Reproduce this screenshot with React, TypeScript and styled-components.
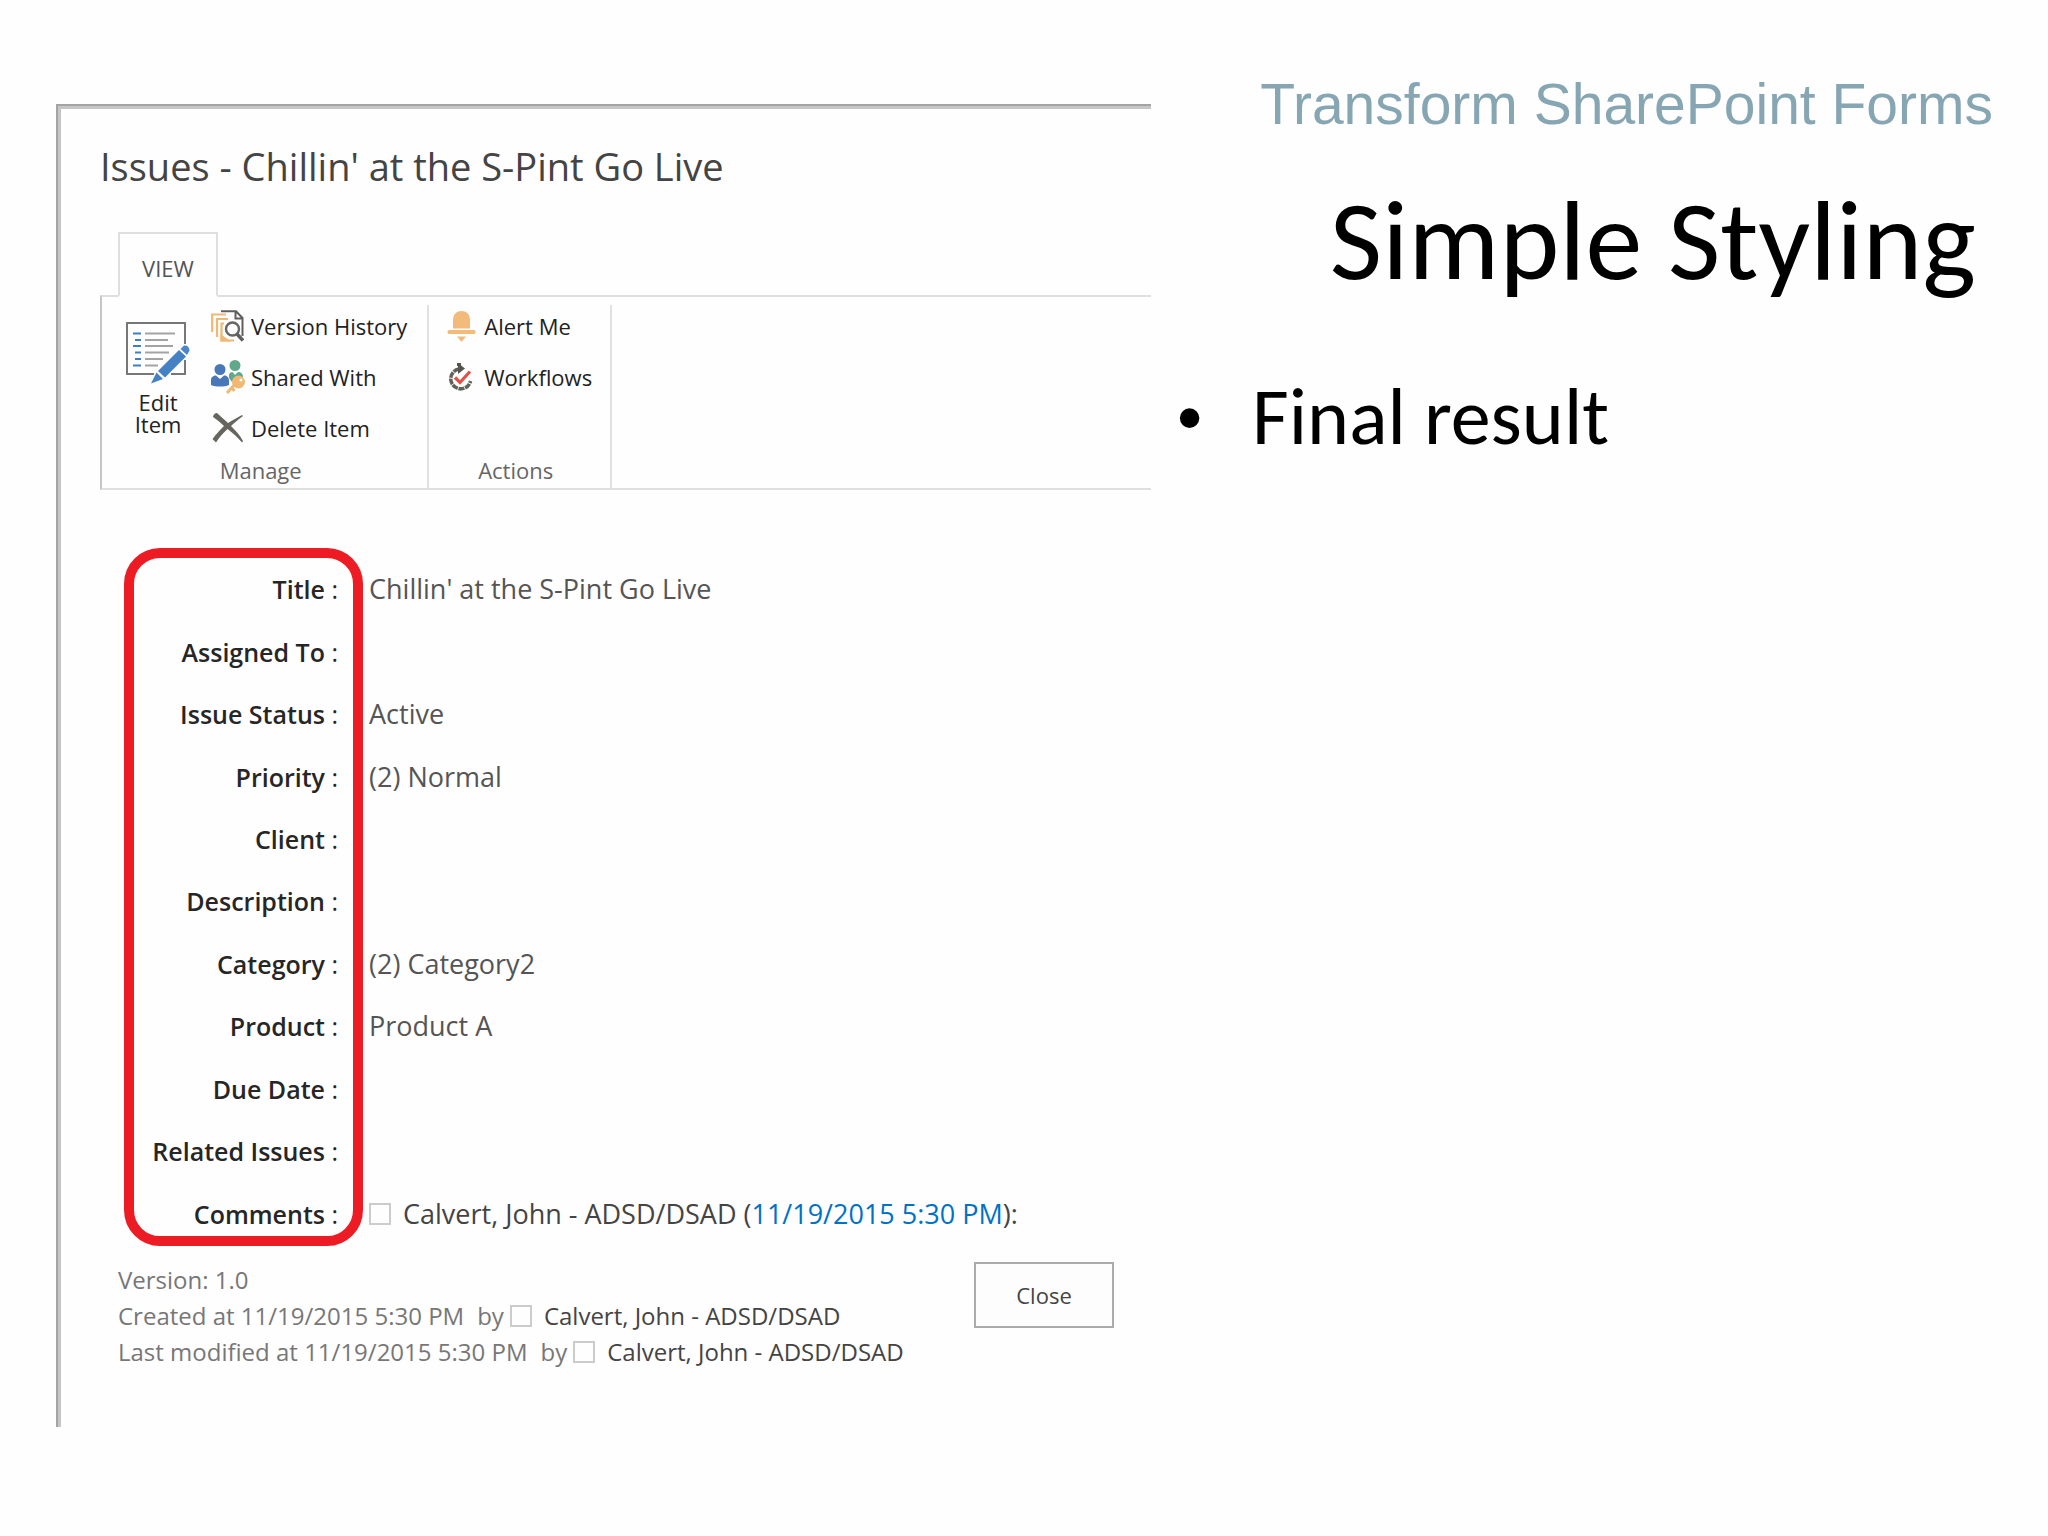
import React from 'react';
import styled, { createGlobalStyle } from 'styled-components';

const GlobalStyle = createGlobalStyle`
  *, *::before, *::after { box-sizing: border-box; }
  body { margin: 0; background: #fefefe; }
  h1, h2, p, ul { margin: 0; padding: 0; font-weight: 400; }
  button, input { font: inherit; margin: 0; }
`;

const uiFont = `'Open Sans', 'Noto Sans', sans-serif`;
const slideFont = `Carlito, Calibri, Lato, sans-serif`;

const Slide = styled.main`
  display: grid;
  grid-template-columns: minmax(0, 1151fr) minmax(0, 897fr);
  align-items: start;
  min-height: 100vh;
`;

const Frame = styled.section`
  margin: 104px 0 0 56px;
  padding: 36px 0 57px 42px;
  border: solid #a4a4a4;
  border-width: 2px 0 0 2px;
  box-shadow: inset 3px 3px 0 #c6c6c6;
  font-family: ${uiFont};
  color: #444;
`;

const PageTitle = styled.h2`
  font-size: 38px;
  line-height: 48px;
  white-space: nowrap;
`;

const TabBar = styled.div`
  display: flex;
  margin-top: 42px;
  padding-left: 18px;
`;

const Tab = styled.button`
  width: 100px;
  height: 65px;
  margin-bottom: -2px;
  padding: 6px 0 0;
  border: 2px solid #dedfe1;
  border-bottom-color: #fefefe;
  background: #fefefe;
  color: #555;
  font-size: 22px;
  position: relative;
`;

const Ribbon = styled.div`
  display: flex;
  padding-top: 8px;
  border: solid #dedfe1;
  border-width: 2px 0;
  border-left: 2px solid #c6c6c8;
`;

const Group = styled.section`
  display: flex;
  flex-direction: column;
  justify-content: space-between;
  border-right: 2px solid #e1e1e3;
`;

const GroupBody = styled.div<{ $start: number; $end: number }>`
  display: flex;
  gap: 21px;
  padding: 0 ${p => p.$end}px 0 ${p => p.$start}px;
`;

const GroupName = styled.h2`
  padding: 5px 8px 2px 0;
  font-size: 22px;
  line-height: 32px;
  text-align: center;
  color: #666;
`;

const Commands = styled.div<{ $icon: number }>`
  display: grid;
  grid-template-columns: ${p => p.$icon}px auto;
  align-content: start;
  row-gap: 9px;
`;

const Command = styled.button`
  display: grid;
  grid-column: 1 / -1;
  grid-template-columns: subgrid;
  align-items: center;
  justify-items: start;
  height: 42px;
  padding: 0;
  border: 0;
  background: none;
  color: #222;
  font-size: 22px;
  line-height: 42px;
  text-align: left;
  white-space: nowrap;
`;

const BigCommand = styled.button`
  display: flex;
  flex-direction: column;
  align-items: center;
  align-self: flex-start;
  gap: 7px;
  width: 64px;
  padding: 17px 0 0;
  border: 0;
  background: none;
  color: #222;
  font-size: 22px;
  line-height: 22px;
`;

const Form = styled.div`
  position: relative;
  margin-top: 68px;
`;

const Highlight = styled.div`
  position: absolute;
  top: -10px;
  bottom: 0;
  left: 24px;
  width: 239px;
  border: 10px solid #ed1c24;
  border-radius: 36px;
  pointer-events: none;
`;

const Fields = styled.table`
  width: 100%;
  height: 688px;
  border-collapse: collapse;
`;

const Label = styled.th`
  width: 269px;
  padding: 0 31px 0 0;
  font-size: 25px;
  font-weight: 600;
  line-height: 62px;
  text-align: right;
  white-space: nowrap;
  color: #262626;
`;

const Colon = styled.span`
  font-weight: 400;
`;

const Value = styled.td`
  padding: 0;
  font-size: 27px;
  line-height: 62px;
  white-space: nowrap;
  color: #555;
`;

const Person = styled.label`
  display: inline-flex;
  align-items: center;
  gap: 12px;
  color: #444;
`;

const Presence = styled.input`
  appearance: none;
  width: 22px;
  height: 22px;
  border: 2px solid #ccc;
  background: #fefefe;
`;

const Stamp = styled.a`
  color: #0072c6;
  text-decoration: none;
`;

const Footer = styled.footer`
  display: flex;
  justify-content: space-between;
  align-items: flex-start;
  margin-top: 16px;
  padding: 0 37px 0 18px;
`;

const History = styled.div`
  font-size: 24px;
  line-height: 36px;
  white-space: nowrap;
  color: #777;
`;

const HistoryLine = styled.p`
  display: flex;
  align-items: center;
`;

const By = styled.span`
  margin: 0 6px 0 13px;
`;

const CloseButton = styled.button`
  width: 140px;
  height: 66px;
  border: 2px solid #ababab;
  background: #fdfdfd;
  color: #444;
  font-size: 22px;
`;

const Notes = styled.section`
  display: flex;
  flex-direction: column;
  padding: 72px 55px 0 26px;
`;

const Deck = styled.p`
  font-family: 'Liberation Sans', Arial, sans-serif;
  font-size: 57px;
  line-height: 64px;
  text-align: right;
  white-space: nowrap;
  color: #87a6b3;
`;

const SlideTitle = styled.h1`
  margin-top: 36px;
  padding-right: 17px;
  font-family: ${slideFont};
  font-size: 114px;
  line-height: 136px;
  text-align: right;
  white-space: nowrap;
  color: #000;
`;

const Bullets = styled.ul`
  margin-top: 62px;
  list-style: none;
  font-family: ${slideFont};
  font-size: 80px;
  line-height: 94px;
  color: #000;
`;

const Bullet = styled.li`
  display: grid;
  grid-template-columns: 75px auto;
  &::before {
    content: '•';
    font-family: 'Liberation Sans', Arial, sans-serif;
    font-size: 72px;
  }
`;

const EditIcon = () => (
  <svg width="64" height="62" viewBox="0 0 64 62" aria-hidden="true">
    <path d="M59 22V1H1v51h27M45 52h14V38" fill="none" stroke="#777" strokeWidth="2" />
    <path d="M7 11.5h8M9 18h6M7 24h8M9 30.500h6M9 37h6M7 43.500h8" stroke="#3f7fc1" strokeWidth="2.200" />
    <path d="M19 11.500h30M19 18h23M19 24h28M19 30.500h24M19 37h18M19 43.500h13" stroke="#a3a3a3" strokeWidth="1.800" />
    <path d="M53 28 60 34.500 39 55.500 32 49Z M30.500 50.500 37 57 25 61.500Z" fill="#4482c3" />
    <path d="M54.500 27 58 23.500Q63 23 63.500 28.500L61 33Z" fill="#4a86c8" />
  </svg>
);

const VersionIcon = () => (
  <svg width="33" height="33" viewBox="0 0 33 33" aria-hidden="true">
    <path d="M15 4.500H1.200V22M17 9H6V27M13 13.500H10.500V30.500H23" fill="none" stroke="#f0b873" strokeWidth="2.200" />
    <path d="M9.500 24v7.500H20z" fill="#f0b873" />
    <path d="M10 1.200H25L31.500 8V26M24.500 1v7.500H32" fill="none" stroke="#5e5e5e" strokeWidth="2" />
    <circle cx="21.500" cy="19" r="6.500" fill="#fefefe" stroke="#666" strokeWidth="2.400" />
    <path d="m26 24 6 6.500" stroke="#5e5e5e" strokeWidth="3.400" />
  </svg>
);

const SharedIcon = () => (
  <svg width="35" height="34" viewBox="0 0 35 34" aria-hidden="true">
    <circle cx="24" cy="5.500" r="5.500" fill="#5fa88c" />
    <path d="M18 18v-3c0-2 2-3 3.500-3l2.500 3 3-3c3 0 5 1.500 5 5l-8 2-3 3z" fill="#5fa88c" />
    <circle cx="9" cy="9.500" r="5.500" fill="#4878b8" />
    <path d="M0 25v-5c0-3 2.500-4.500 5-4.500l4 3.500 4-3.500c3 0 5 2 5 5V25c-5 2-13 2-18 0Z" fill="#4878b8" />
    <circle cx="27.500" cy="22" r="6.500" fill="#f0b873" />
    <circle cx="30" cy="20" r="1.500" fill="#fff" />
    <path d="m24 24-8 9M21 28l2.500 3" stroke="#f0b873" strokeWidth="3" fill="none" />
  </svg>
);

const DeleteIcon = () => (
  <svg width="33" height="30" viewBox="0 0 33 30" aria-hidden="true">
    <path d="M6 0C9 3 13 6 17 10 22 7 27 4 31 2l1 1c-4 3-8 6-12 10 4 4 9 9 12 15l-1 1.500C27 25 22 20 16.500 16 12 20 8 25 5 29.500L1.500 26C5 21 9 17 13 13 9 9 5 6 2 4 2 2 4 0 6 0Z" fill="#66665f" />
  </svg>
);

const BellIcon = () => (
  <svg width="29" height="31" viewBox="0 0 29 31" aria-hidden="true">
    <path d="M6 17.500V9c0-6 4-9 8.500-9S23 3 23 9v8.500Z" fill="#f3bb7a" />
    <path d="M2 19h25c2 0 2 4 0 4H2c-2 0-2-4 0-4Z" fill="#f3bb7a" />
    <path d="M10 25.500h9L14.500 31Z" fill="#f3bb7a" />
  </svg>
);

const WorkflowIcon = () => (
  <svg width="29" height="30" viewBox="0 0 29 30" aria-hidden="true">
    <path d="M12 7A10 10 0 1 0 23.500 19" fill="none" stroke="#62625c" strokeWidth="3.600" strokeDasharray="6 .8" />
    <path d="M11 1 18 6.500 11 12Z" fill="#55554f" />
    <path d="M10 1h4v3h-4z" fill="#55554f" />
    <path d="m8 15.500 5 5 10-11" fill="none" stroke="#e25248" strokeWidth="3.200" />
  </svg>
);

const manage = [
  { name: 'Version History', Icon: VersionIcon },
  { name: 'Shared With', Icon: SharedIcon },
  { name: 'Delete Item', Icon: DeleteIcon },
];

const actions = [
  { name: 'Alert Me', Icon: BellIcon },
  { name: 'Workflows', Icon: WorkflowIcon },
];

const author = 'Calvert, John - ADSD/DSAD';
const stamp = '11/19/2015 5:30 PM';

const fields: { label: string; value?: React.ReactNode }[] = [
  { label: 'Title', value: "Chillin' at the S-Pint Go Live" },
  { label: 'Assigned To' },
  { label: 'Issue Status', value: 'Active' },
  { label: 'Priority', value: '(2) Normal' },
  { label: 'Client' },
  { label: 'Description' },
  { label: 'Category', value: '(2) Category2' },
  { label: 'Product', value: 'Product A' },
  { label: 'Due Date' },
  { label: 'Related Issues' },
  {
    label: 'Comments',
    value: (
      <Person>
        <Presence type="checkbox" />
        <span>{author} (<Stamp href="#comment">{stamp}</Stamp>):</span>
      </Person>
    ),
  },
];

const HistoryEntry = ({ action }: { action: string }) => (
  <HistoryLine>
    {action} at {stamp}
    <By>by</By>
    <Person>
      <Presence type="checkbox" />
      {author}
    </Person>
  </HistoryLine>
);

export default function App() {
  return (
    <>
      <GlobalStyle />
      <Slide>
        <Frame>
          <PageTitle>Issues - Chillin' at the S-Pint Go Live</PageTitle>
          <TabBar>
            <Tab type="button">VIEW</Tab>
          </TabBar>
          <Ribbon>
            <Group>
              <GroupBody $start={24} $end={20}>
                <BigCommand type="button">
                  <EditIcon />
                  <span>Edit<br />Item</span>
                </BigCommand>
                <Commands $icon={40}>
                  {manage.map(({ name, Icon }) => (
                    <Command type="button" key={name}><Icon />{name}</Command>
                  ))}
                </Commands>
              </GroupBody>
              <GroupName>Manage</GroupName>
            </Group>
            <Group>
              <GroupBody $start={18} $end={18}>
                <Commands $icon={37}>
                  {actions.map(({ name, Icon }) => (
                    <Command type="button" key={name}><Icon />{name}</Command>
                  ))}
                </Commands>
              </GroupBody>
              <GroupName>Actions</GroupName>
            </Group>
          </Ribbon>
          <Form>
            <Fields>
              <tbody>
                {fields.map(({ label, value }) => (
                  <tr key={label}>
                    <Label scope="row">{label}<Colon> :</Colon></Label>
                    <Value>{value}</Value>
                  </tr>
                ))}
              </tbody>
            </Fields>
            <Highlight />
          </Form>
          <Footer>
            <History>
              <HistoryLine>Version: 1.0</HistoryLine>
              <HistoryEntry action="Created" />
              <HistoryEntry action="Last modified" />
            </History>
            <CloseButton type="button">Close</CloseButton>
          </Footer>
        </Frame>
        <Notes>
          <Deck>Transform SharePoint Forms</Deck>
          <SlideTitle>Simple Styling</SlideTitle>
          <Bullets>
            <Bullet>Final result</Bullet>
          </Bullets>
        </Notes>
      </Slide>
    </>
  );
}
